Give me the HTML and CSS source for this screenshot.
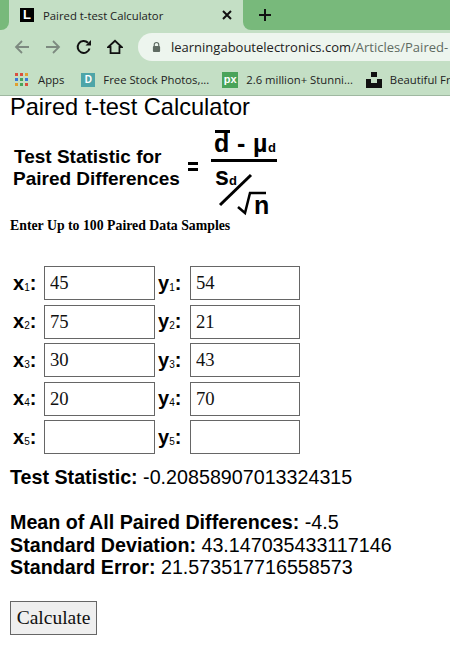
FILE: index.html
```html
<!DOCTYPE html>
<html lang="en">
  <head>
    <meta charset="UTF-8" />
    <meta name="viewport" content="width=device-width, initial-scale=1.0" />
    <title>Paired t-test Calculator</title>
    <link rel="stylesheet" href="styles.css">
  </head>
  <body>
    <div class="tab-strip">
      <div class="strip-left"></div>
      <div class="tab">
        <span class="favicon">L</span>
        <span class="tab-title">Paired t-test Calculator</span>
        <svg class="tab-close" width="10" height="10" viewBox="0 0 10 10">
          <path d="M1 1L9 9M9 1L1 9" stroke="#111" stroke-width="2" />
        </svg>
      </div>
      <div class="strip-right">
        <svg class="new-tab" width="14" height="14" viewBox="0 0 14 14">
          <path d="M7 1V13M1 7H13" stroke="#111" stroke-width="2" />
        </svg>
      </div>
    </div>

    <div class="toolbar">
      <svg class="tool" width="16" height="16" viewBox="0 0 16 16">
        <path d="M15 8H2M8 2L2 8L8 14" fill="none" stroke="#7d8a80" stroke-width="1.8" />
      </svg>
      <svg class="tool" width="16" height="16" viewBox="0 0 16 16">
        <path d="M1 8H14M8 2L14 8L8 14" fill="none" stroke="#7d8a80" stroke-width="1.8" />
      </svg>
      <svg class="tool" width="16" height="16" viewBox="0 0 16 16">
        <path d="M13.5 9.5A6 6 0 1 1 12 3.8" fill="none" stroke="#111" stroke-width="2" />
        <path d="M9.5 6.5H15V1Z" fill="#111" />
      </svg>
      <svg class="tool" width="16" height="16" viewBox="0 0 18 17">
        <path d="M1.5 8.5L9 1.5L16.5 8.5H14V15.5H4V8.5Z" fill="none" stroke="#111" stroke-width="2" />
      </svg>
      <div class="address">
        <svg class="lock" width="9" height="12" viewBox="0 0 10 12">
          <path d="M2.5 5V3.5A2.5 2.5 0 0 1 7.5 3.5V5" fill="none" stroke="#5f6b62" stroke-width="1.3" />
          <rect x="1" y="5" width="8" height="6.5" rx="1" fill="#5f6b62" />
        </svg>
        <span class="url">learningaboutelectronics.com<span class="url-path">/Articles/Paired-</span></span>
      </div>
    </div>

    <div class="bookmarks">
      <div class="bookmark">
        <svg width="14" height="14" viewBox="0 0 14 14">
          <rect x="0" y="0" width="3" height="3" fill="#d9503f" />
          <rect x="5" y="0" width="3" height="3" fill="#d9503f" />
          <rect x="10" y="0" width="3" height="3" fill="#e0a030" />
          <rect x="0" y="5" width="3" height="3" fill="#3c78d8" />
          <rect x="5" y="5" width="3" height="3" fill="#4aa35a" />
          <rect x="10" y="5" width="3" height="3" fill="#3c78d8" />
          <rect x="0" y="10" width="3" height="3" fill="#e0a030" />
          <rect x="5" y="10" width="3" height="3" fill="#4aa35a" />
          <rect x="10" y="10" width="3" height="3" fill="#d9503f" />
        </svg>
        <span>Apps</span>
      </div>
      <div class="bookmark">
        <span class="fav-d">D</span>
        <span>Free Stock Photos,...</span>
      </div>
      <div class="bookmark">
        <span class="fav-px">px</span>
        <span>2.6 million+ Stunni...</span>
      </div>
      <div class="bookmark">
        <svg width="16" height="16" viewBox="0 0 16 16">
          <path d="M5 0H11V5H5ZM0 7H5V11H11V7H16V16H0Z" fill="#111" />
        </svg>
        <span>Beautiful Fr</span>
      </div>
    </div>

    <div class="page">
      <div class="page-title">Paired t-test Calculator</div>

      <svg class="formula" width="290" height="95" viewBox="0 0 290 95">
        <text x="4" y="39" class="f-label">Test Statistic for</text>
        <text x="3" y="61" class="f-label">Paired Differences</text>
        <rect x="178" y="38" width="10" height="3" fill="#000" />
        <rect x="178" y="44" width="10" height="3" fill="#000" />
        <rect x="205" y="6" width="15" height="3" fill="#000" />
        <text x="204" y="28" class="f-big">d</text>
        <text x="227" y="28" class="f-big">-</text>
        <text x="243" y="28" class="f-big">µ</text>
        <text x="258" y="28" class="f-sub">d</text>
        <rect x="201" y="35" width="66" height="3" fill="#000" />
        <text x="205" y="61" class="f-big">s</text>
        <text x="219" y="61" class="f-sub">d</text>
        <path d="M210 81L241 51" stroke="#000" stroke-width="3" />
        <path d="M228 83L235 89L240 69H256" fill="none" stroke="#000" stroke-width="2.5" />
        <text x="244" y="90" class="f-big">n</text>
      </svg>

      <div class="samples-heading">Enter Up to 100 Paired Data Samples</div>

      <form class="samples">
        <label class="var">x<sub>1</sub>:</label>
        <input type="text" class="sample-input" value="45" />
        <label class="var">y<sub>1</sub>:</label>
        <input type="text" class="sample-input" value="54" />

        <label class="var">x<sub>2</sub>:</label>
        <input type="text" class="sample-input" value="75" />
        <label class="var">y<sub>2</sub>:</label>
        <input type="text" class="sample-input" value="21" />

        <label class="var">x<sub>3</sub>:</label>
        <input type="text" class="sample-input" value="30" />
        <label class="var">y<sub>3</sub>:</label>
        <input type="text" class="sample-input" value="43" />

        <label class="var">x<sub>4</sub>:</label>
        <input type="text" class="sample-input" value="20" />
        <label class="var">y<sub>4</sub>:</label>
        <input type="text" class="sample-input" value="70" />

        <label class="var">x<sub>5</sub>:</label>
        <input type="text" class="sample-input" />
        <label class="var">y<sub>5</sub>:</label>
        <input type="text" class="sample-input" />
      </form>

      <div class="results">
        <p><b>Test Statistic:</b> -0.20858907013324315</p>
        <p>
          <b>Mean of All Paired Differences:</b> -4.5<br />
          <b>Standard Deviation:</b> 43.147035433117146<br />
          <b>Standard Error:</b> 21.573517716558573
        </p>
      </div>

      <button type="button" class="calculate">Calculate</button>
    </div>
  </body>
</html>
```

FILE: styles.css
```css
body {
  margin: 0;
  overflow: hidden;
  background-color: white;
  color: black;
  font-family: "Liberation Sans", Arial, sans-serif;
}

.tab-strip {
  height: 30px;
  display: flex;
  background-color: #c4dfc5;
}

.strip-left {
  width: 9px;
  background-color: #78b97b;
  border-radius: 0 0 8px 0;
}

.strip-right {
  flex: 1;
  display: flex;
  align-items: center;
  padding-left: 15px;
  background-color: #78b97b;
  border-radius: 0 0 0 8px;
}

.tab {
  width: 234px;
  padding-left: 11px;
  box-sizing: border-box;
  display: flex;
  align-items: center;
  background-color: #c4dfc5;
}

.favicon {
  width: 14px;
  height: 14px;
  background-color: #000;
  color: white;
  font: bold 13px/14px "Liberation Sans", sans-serif;
  text-align: center;
}

.tab-title {
  margin-left: 9px;
  font-family: "Open Sans", sans-serif;
  font-size: 11.3px;
  color: #222;
  width: 179px;
  white-space: nowrap;
}

.tab-close {
  flex-shrink: 0;
}

.toolbar {
  height: 34px;
  display: flex;
  align-items: center;
  background-color: #c4dfc5;
  padding-left: 14px;
  gap: 15px;
}

.address {
  flex: 1;
  height: 28px;
  padding-left: 14px;
  display: flex;
  align-items: center;
  gap: 10px;
  background-color: #edf5ee;
  border-radius: 14px 0 0 14px;
  overflow: hidden;
}

.lock {
  flex-shrink: 0;
}

.url {
  font-family: "Open Sans", sans-serif;
  font-size: 13px;
  color: #222;
  white-space: nowrap;
}

.url-path {
  color: #5f6b62;
}

.bookmarks {
  height: 32px;
  display: flex;
  align-items: center;
  background-color: #c4dfc5;
  border-bottom: 1px solid #9fb8a1;
  box-sizing: border-box;
  padding-left: 15px;
  gap: 13px;
  white-space: nowrap;
  font-family: "Open Sans", sans-serif;
  font-size: 11.3px;
  color: #222;
}

.bookmark {
  display: flex;
  align-items: center;
  gap: 8px;
}

.bookmark:first-child {
  gap: 9px;
  margin-right: 4px;
}

.fav-d {
  width: 14px;
  height: 14px;
  background-color: #4ea5a8;
  color: white;
  font: bold 10px/14px "Liberation Sans", sans-serif;
  text-align: center;
}

.fav-px {
  width: 16px;
  height: 16px;
  background-color: #4aa35a;
  color: white;
  font: bold 11px/14px "Liberation Sans", sans-serif;
  text-align: center;
}

.page {
  padding: 0 10px;
}

.page-title {
  font-size: 23.6px;
  line-height: 22px;
}

.formula {
  display: block;
  margin-top: 6px;
}

.f-label {
  font-weight: bold;
  font-size: 19px;
}

.f-big {
  font-weight: bold;
  font-size: 25px;
}

.f-sub {
  font-weight: bold;
  font-size: 13px;
}

.samples-heading {
  font-family: "Liberation Serif", serif;
  font-weight: bold;
  font-size: 13.8px;
  line-height: 16px;
  margin-top: -1px;
}

.samples {
  display: grid;
  grid-template-columns: 34px 111px 35px 110px;
  grid-auto-rows: 34px;
  row-gap: 4.5px;
  align-items: center;
  margin-top: 32px;
  width: 290px;
}

.var {
  font-size: 20px;
  font-weight: bold;
  padding-left: 3px;
  white-space: nowrap;
}

.var sub {
  font-size: 10px;
  font-weight: normal;
  vertical-align: -1px;
}

.sample-input {
  width: 100%;
  height: 34px;
  box-sizing: border-box;
  padding: 0 5px;
  border: 1px solid #666;
  font-family: "Liberation Serif", serif;
  font-size: 18.67px;
  color: #111;
}

.results {
  font-size: 19.7px;
  line-height: 22.5px;
  margin-top: 12px;
}

.results p {
  margin: 0 0 22.5px;
}

.calculate {
  display: block;
  width: 87px;
  height: 34px;
  padding: 0;
  margin-top: 1px;
  background-color: #efefef;
  border: 1px solid #666;
  font-family: "Liberation Serif", serif;
  font-size: 19.5px;
  color: #111;
}
```
